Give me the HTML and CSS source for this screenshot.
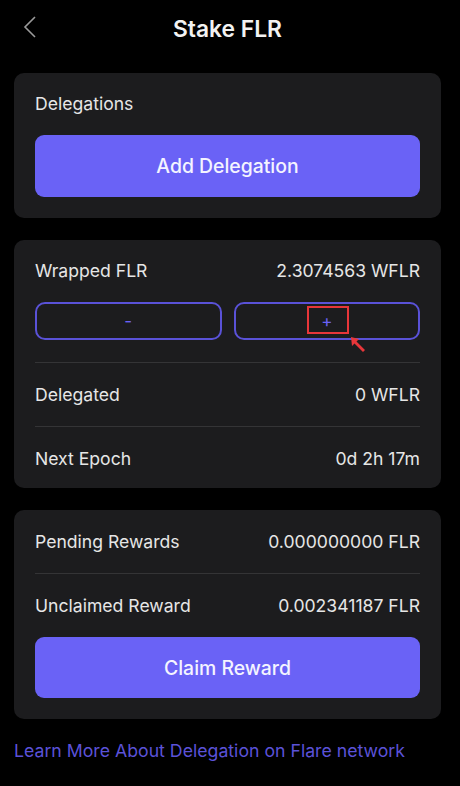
FILE: index.html
```html
<!DOCTYPE html>
<html lang="en">
<head>
  <meta charset="UTF-8">
  <meta name="viewport" content="width=device-width, initial-scale=1">
  <title>Stake FLR</title>
  <link rel="stylesheet" href="styles.css">
</head>
<body>

  <div class="header">
    <svg class="back" width="14" height="22" viewBox="0 0 14 22">
      <path d="M12 1 L2 11 L12 21" fill="none" stroke="#9a9a9a" stroke-width="1.6"/>
    </svg>
    <h1>Stake FLR</h1>
  </div>

  <div class="card card-delegations">
    <div class="label">Delegations</div>
    <button class="btn-primary">Add Delegation</button>
  </div>

  <div class="card card-wrapped">
    <div class="row">
      <span>Wrapped FLR</span>
      <span>2.3074563 WFLR</span>
    </div>
    <div class="amount-btns">
      <button class="btn-outline">-</button>
      <button class="btn-outline plus">
        +
        <span class="highlight"></span>
        <svg class="pointer" width="18" height="18" viewBox="0 0 18 18">
          <path d="M1 1 L9 3 L6.5 5.5 L15 14 L13 16 L4.5 7.5 L2 10 Z" fill="#e8363a"/>
        </svg>
      </button>
    </div>
    <div class="divider"></div>
    <div class="row row-sep">
      <span>Delegated</span>
      <span>0 WFLR</span>
    </div>
    <div class="divider"></div>
    <div class="row row-sep">
      <span>Next Epoch</span>
      <span>0d 2h 17m</span>
    </div>
  </div>

  <div class="card card-rewards">
    <div class="row">
      <span>Pending Rewards</span>
      <span>0.000000000 FLR</span>
    </div>
    <div class="divider"></div>
    <div class="row row-sep">
      <span>Unclaimed Reward</span>
      <span>0.002341187 FLR</span>
    </div>
    <button class="btn-primary claim">Claim Reward</button>
  </div>

  <a class="learn" href="#">Learn More About Delegation on Flare network</a>

</body>
</html>
```

FILE: styles.css
```css
/* Basic Reset */
* { margin: 0; padding: 0; box-sizing: border-box; }
body {
  font-family: 'Inter', 'Noto Sans', sans-serif;
  background: #000;
  color: #e6e6e6;
  width: 460px;
  min-height: 786px;
  padding: 0 19px 0 14px;
}
.header {
  position: relative;
  height: 56px;
  display: flex;
  align-items: center;
  justify-content: center;
}
.header .back {
  position: absolute;
  left: 9px;
  top: 16px;
}
h1 {
  font-size: 22.8px;
  font-weight: 600;
  color: #f2f2f2;
}
.card {
  background: #1c1c1e;
  border-radius: 10px;
  padding: 19px 21px 21px;
  margin-top: 22px;
}
.card-delegations {
  margin-top: 17px;
}
.label, .row {
  font-size: 17.6px;
  line-height: 24px;
}
.row {
  display: flex;
  justify-content: space-between;
}
.row-sep {
  padding: 20px 0 19px;
}
.card-wrapped .row-sep:last-child {
  padding-bottom: 0;
}
.card-wrapped {
  padding-bottom: 17px;
}
.card-rewards {
  padding-top: 20px;
}
.card-rewards > .row:first-child {
  margin-bottom: 19px;
}
.divider {
  height: 1px;
  background: #343436;
}
.btn-primary {
  display: block;
  width: 100%;
  height: 62px;
  margin-top: 19px;
  border: none;
  border-radius: 9px;
  background: #6a62f6;
  color: #f4f4ff;
  font-family: inherit;
  font-size: 19.4px;
  font-weight: 500;
}
.btn-primary.claim {
  margin-top: 0;
  height: 61px;
}
.amount-btns {
  display: flex;
  gap: 12px;
  margin: 19px 0 22px;
}
.btn-outline {
  position: relative;
  flex: 1;
  height: 38px;
  background: transparent;
  border: 2px solid #5a52d8;
  border-radius: 10px;
  color: #6a62f6;
  font-family: inherit;
  font-size: 17px;
}
.highlight {
  position: absolute;
  left: 71px;
  top: 2px;
  width: 42px;
  height: 28px;
  border: 2px solid #e8363a;
}
.pointer {
  position: absolute;
  left: 114px;
  top: 32px;
}
.learn {
  display: block;
  margin-top: 20px;
  font-size: 17.7px;
  line-height: 24px;
  color: #5b52d8;
  text-decoration: none;
}
```
